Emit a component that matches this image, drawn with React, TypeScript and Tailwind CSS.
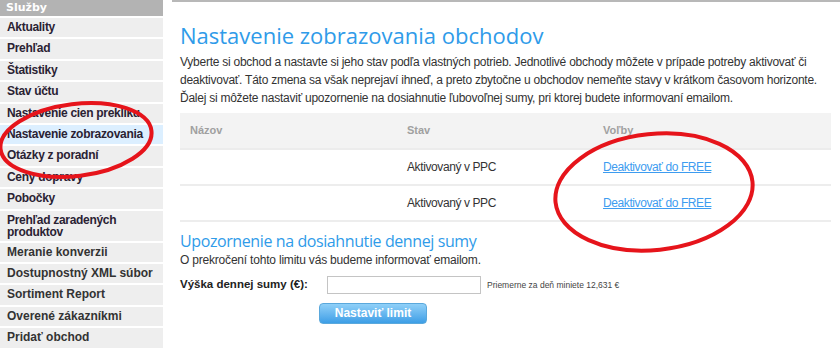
import React from "react";

const menu: { label: string; top?: boolean; active?: boolean; two?: boolean }[] = [
  { label: "Aktuality", top: true },
  { label: "Prehľad", top: true },
  { label: "Štatistiky", top: true },
  { label: "Stav účtu", top: true },
  { label: "Nastavenie cien prekliku", top: true },
  { label: "Nastavenie zobrazovania", top: true, active: true },
  { label: "Otázky z poradní", top: true },
  { label: "Ceny dopravy", top: true },
  { label: "Pobočky", top: true },
  { label: "Prehľad zaradených produktov", top: true, two: true },
  { label: "Meranie konverzii" },
  { label: "Dostupnostný XML súbor" },
  { label: "Sortiment Report" },
  { label: "Overené zákazníkmi" },
  { label: "Pridať obchod" },
];

export default function App() {
  return (
    <div className="relative w-[840px] h-[351px] overflow-hidden bg-white text-[#333] font-['Liberation_Sans',Arial,sans-serif]">
      <div className="flex">
        {/* Sidebar */}
        <div className="w-[163px] shrink-0 flex flex-col gap-[2px]">
          <div className="h-[16px] bg-[#b3b3b3] text-white font-bold text-[11px] leading-[16px] px-[6px] font-['DejaVu_Sans',sans-serif]">
            Služby
          </div>
          {menu.map((m) => (
            <div
              key={m.label}
              className={`px-[7px] py-[3px] text-[12px] font-bold ${
                m.two ? "leading-[12px]" : "leading-[13.4px]"
              } ${m.active ? "bg-[#dcefff]" : "bg-[#eeeeee]"} ${
                m.top ? "text-[#2a2233] tracking-[-0.3px]" : "text-[#333]"
              }`}
            >
              {m.label}
            </div>
          ))}
        </div>

        {/* Main */}
        <div className="ml-[9px] flex-1">
          <div className="h-[2px] bg-[#b8b8b8]" />
          <div className="pl-[8px] pr-[9px]">
            <h1 className="mt-[20px] text-[22px] leading-[26px] text-[#2f9be9] font-['Open_Sans',sans-serif] font-medium whitespace-nowrap">
              Nastavenie zobrazovania obchodov
            </h1>
            <p className="mt-[5px] text-[12px] leading-[18px] tracking-[-0.25px] text-[#333] whitespace-nowrap">
              Vyberte si obchod a nastavte si jeho stav podľa vlastných potrieb. Jednotlivé obchody môžete v prípade potreby aktivovať či
              <br />
              deaktivovať. Táto zmena sa však neprejaví ihneď, a preto zbytočne u obchodov nemeňte stavy v krátkom časovom horizonte.
              <br />
              Ďalej si môžete nastaviť upozornenie na dosiahnutie ľubovoľnej sumy, pri ktorej budete informovaní emailom.
            </p>

            <div className="mt-[6px] w-[651px]">
              <div className="h-[37px] bg-[#f3f3f3] flex items-center text-[11px] font-bold text-[#a0a0a0] border-b-2 border-[#ececec]">
                <div className="w-[227px] pl-[10px]">Názov</div>
                <div className="w-[196px]">Stav</div>
                <div>Voľby</div>
              </div>
              {[0, 1].map((i) => (
                <div key={i} className="h-[36px] flex items-center text-[12px] tracking-[-0.4px] border-b-2 border-[#ededed]">
                  <div className="w-[227px]" />
                  <div className="w-[196px]">Aktivovaný v PPC</div>
                  <a href="#" className="text-[#3d9cf0] underline">
                    Deaktivovať do FREE
                  </a>
                </div>
              ))}
            </div>

            <h2 className="mt-[9px] text-[16px] leading-[20px] tracking-[-0.4px] text-[#2f9be9] font-['Open_Sans',sans-serif] font-medium whitespace-nowrap">
              Upozornenie na dosiahnutie dennej sumy
            </h2>
            <p className="mt-[1px] text-[12px] leading-[16px] tracking-[-0.2px] text-[#333] whitespace-nowrap">
              O prekročení tohto limitu vás budeme informovať emailom.
            </p>
            <div className="mt-[8px] flex items-center">
              <label className="w-[147px] text-[11.5px] font-bold text-[#222] whitespace-nowrap">
                Výška dennej sumy (€):
              </label>
              <input className="w-[154px] h-[18px] border border-[#c4c4c4] bg-white" />
              <span className="ml-[6px] text-[8.5px] text-[#444] whitespace-nowrap">Priemerne za deň miniete 12,631 €</span>
            </div>
            <div className="mt-[6px] ml-[139px]">
              <button className="w-[108px] h-[21px] rounded-[4px] border border-[#5aa8dc] bg-gradient-to-b from-[#8fd0f8] to-[#3c9ee6] text-white font-bold text-[12px] leading-[19px]">
                Nastaviť limit
              </button>
            </div>
          </div>
        </div>
      </div>

      {/* Red annotation circles */}
      <svg className="absolute left-0 top-0 pointer-events-none" width="840" height="351">
        <ellipse cx="76" cy="140" rx="76" ry="36" fill="none" stroke="#e6141b" strokeWidth="4" transform="rotate(-7 76 140)" />
        <ellipse cx="654" cy="192" rx="99" ry="58" fill="none" stroke="#e6141b" strokeWidth="4" transform="rotate(-6 654 192)" />
      </svg>
    </div>
  );
}
